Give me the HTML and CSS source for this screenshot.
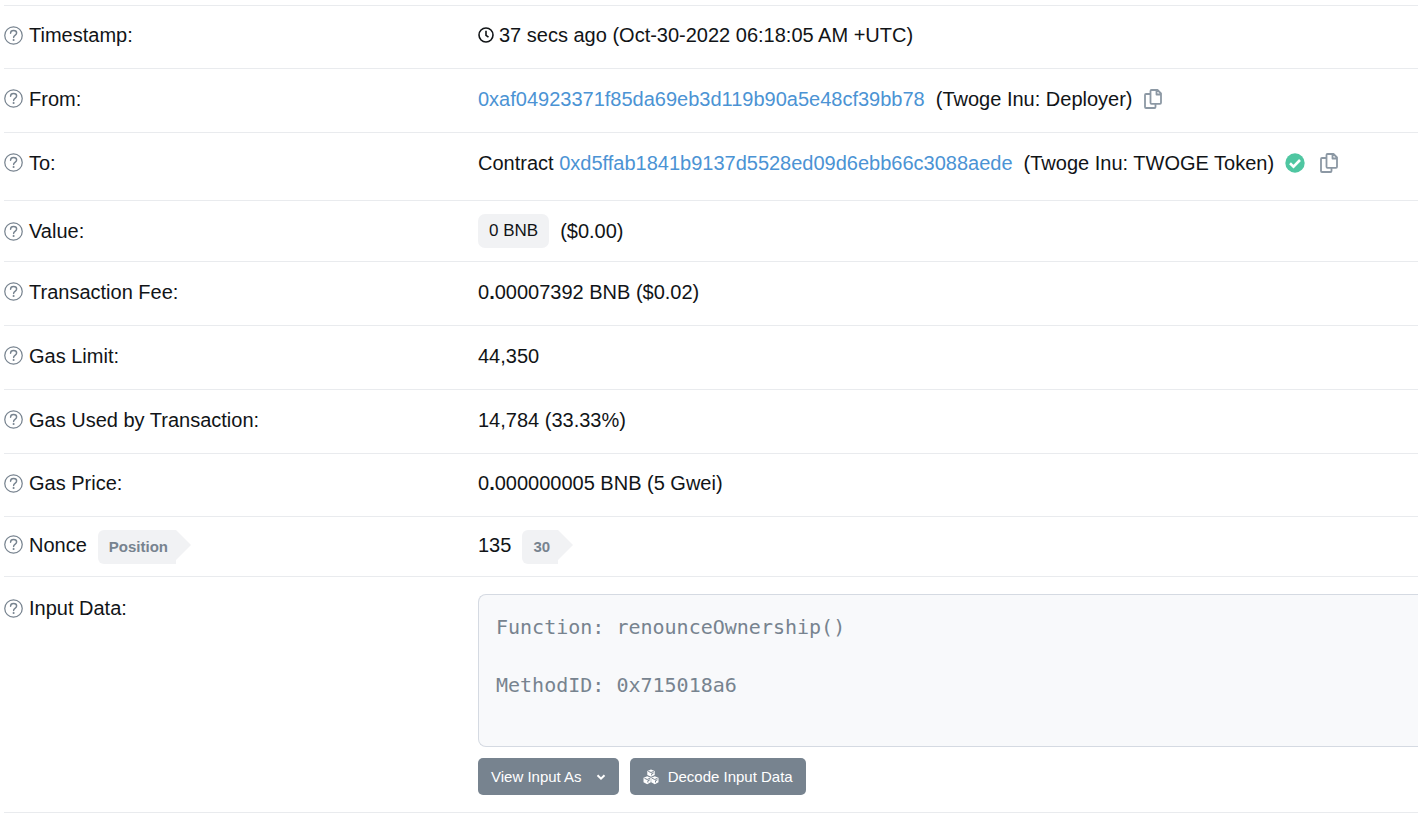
FILE: index.html
```html
<!DOCTYPE html>
<html lang="en">

<head>
    <meta charset="UTF-8">
    <meta name="viewport" content="width=device-width, initial-scale=1.0">
    <title>Transaction Details</title>
    <link rel="stylesheet" href="styles.css">
</head>

<body>
    <!-- shared icons -->
    <svg class="sprite" aria-hidden="true">
        <symbol id="help" viewBox="0 0 20 20">
            <circle cx="10" cy="10" r="9.2" fill="none" stroke="currentColor" stroke-width="1.3" />
            <path d="M6.900 7.600c0-1.700 1.300-2.900 3.200-2.900s3.200 1.100 3.200 2.700c0 1.200-.8 1.800-1.700 2.400-1 .7-1.500 1.200-1.500 2.300" fill="none"
                stroke="currentColor" stroke-width="1.500" stroke-linecap="round" />
            <circle cx="10.1" cy="14.700" r="1.100" fill="currentColor" />
        </symbol>
        <symbol id="copy" viewBox="0 0 18 20">
            <path d="M7.500 1h6L17 4.500V13.800a1 1 0 0 1-1 1H7.500a1 1 0 0 1-1-1V2a1 1 0 0 1 1-1z M12.500 1.200v4.300h4.300 M6.300 5H2a1 1 0 0 0-1 1v12a1 1 0 0 0 1 1h8.500a1 1 0 0 0 1-1v-3"
                fill="none" stroke="currentColor" stroke-width="1.8" stroke-linejoin="round" />
        </symbol>
    </svg>

    <dl class="details">
        <div class="row row-first">
            <dt class="label"><svg class="help"><use href="#help" /></svg>Timestamp:</dt>
            <dd class="value">
                <svg class="clock" viewBox="0 0 16 16">
                    <circle cx="8" cy="8" r="7" />
                    <path d="M8 3.800v4.500l2.500 1.900" />
                </svg>
                <span>37 secs ago (Oct-30-2022 06:18:05 AM +UTC)</span>
            </dd>
        </div>
        <div class="row">
            <dt class="label"><svg class="help"><use href="#help" /></svg>From:</dt>
            <dd class="value value-wide">
                <a href="#from">0xaf04923371f85da69eb3d119b90a5e48cf39bb78</a>
                <span>(Twoge Inu: Deployer)</span>
                <button class="copy" type="button" aria-label="Copy address"><svg><use href="#copy" /></svg></button>
            </dd>
        </div>
        <div class="row row-to">
            <dt class="label"><svg class="help"><use href="#help" /></svg>To:</dt>
            <dd class="value value-wide">
                <span>Contract <a href="#to">0xd5ffab1841b9137d5528ed09d6ebb66c3088aede</a></span>
                <span>(Twoge Inu: TWOGE Token)</span>
                <svg class="check" viewBox="0 0 20 20">
                    <circle cx="10" cy="10" r="9.700" fill="#4fc6a1" />
                    <path d="M5 10.300l3.500 3.400 6.500-6.700" fill="none" stroke="#fff" stroke-width="2.600" />
                </svg>
                <button class="copy copy-to" type="button" aria-label="Copy contract"><svg><use href="#copy" /></svg></button>
            </dd>
        </div>
        <div class="row row-badge">
            <dt class="label"><svg class="help"><use href="#help" /></svg>Value:</dt>
            <dd class="value value-wide">
                <span class="badge">0 BNB</span>
                <span>($0.00)</span>
            </dd>
        </div>
        <div class="row">
            <dt class="label"><svg class="help"><use href="#help" /></svg>Transaction Fee:</dt>
            <dd class="value"><span>0<b>.</b>00007392 BNB ($0.02)</span></dd>
        </div>
        <div class="row">
            <dt class="label"><svg class="help"><use href="#help" /></svg>Gas Limit:</dt>
            <dd class="value">44,350</dd>
        </div>
        <div class="row">
            <dt class="label"><svg class="help"><use href="#help" /></svg>Gas Used by Transaction:</dt>
            <dd class="value">14,784 (33.33%)</dd>
        </div>
        <div class="row row-first">
            <dt class="label"><svg class="help"><use href="#help" /></svg>Gas Price:</dt>
            <dd class="value"><span>0<b>.</b>000000005 BNB (5 Gwei)</span></dd>
        </div>
        <div class="row row-nonce">
            <dt class="label"><svg class="help"><use href="#help" /></svg>Nonce <span class="arrow">Position</span></dt>
            <dd class="value">135 <span class="arrow">30</span></dd>
        </div>
        <div class="row row-input">
            <dt class="label"><svg class="help"><use href="#help" /></svg><label for="input-data">Input Data:</label></dt>
            <dd class="input">
                <textarea id="input-data" class="data" rows="4" readonly>Function: renounceOwnership()

MethodID: 0x715018a6</textarea>
                <div class="buttons">
                    <button class="btn" type="button">View Input As
                        <svg class="chevron" viewBox="0 0 10 10">
                            <path d="M1.500 3.300L5 6.700l3.500-3.400" />
                        </svg>
                    </button>
                    <button class="btn btn-decode" type="button">
                        <svg class="cubes" viewBox="0 0 16 16">
                            <path class="solid" d="M8 .5l3.700 1.400v4.200L8 7.800 4.300 6.100V1.900z M4.200 7.200L7.800 8.700v4.500l-3.600 2-3.700-2V8.700z M11.800 7.200l3.700 1.500v4.500l-3.700 2-3.600-2V8.700z" />
                            <path class="edges" d="M5.300 2.400L8 3.500l2.700-1.100 M8.700 6.300V4.700l2-.8 M1.500 9.300l2.700 1.200 2.700-1.200 M4.900 13.500v-1.800l2-.9 M9.100 9.300l2.700 1.200 2.700-1.200 M12.500 13.500v-1.800l2-.9" />
                        </svg>
                        Decode Input Data
                    </button>
                </div>
            </dd>
        </div>
    </dl>
</body>

</html>
```

FILE: styles.css
```css
* {
    box-sizing: border-box;
}

body {
    margin: 0;
    padding: 5px 0 0 4px;
    background: #fff;
    color: #111417;
    font-family: "Liberation Sans", Arial, sans-serif;
    font-size: 20px;
    line-height: 28px;
}

a {
    color: #4b93d4;
    text-decoration: none;
}

button {
    font-family: inherit;
    border: 0;
    cursor: pointer;
}

.sprite {
    display: none;
}

.details {
    margin: 0;
    border-bottom: 1px solid #e9ebee;
}

.row {
    display: grid;
    grid-template-columns: 1fr 2fr;
    column-gap: 4px;
    align-items: center;
    min-height: 64px;
    padding-bottom: 4px;
    border-top: 1px solid #e9ebee;
}

.row-first {
    min-height: 63px;
}

.row-to {
    min-height: 68px;
    padding-bottom: 8px;
}

.row-badge {
    min-height: 61px;
    padding-bottom: 0;
}

.row-nonce {
    min-height: 60px;
    padding-bottom: 0;
}

.label,
.value {
    display: flex;
    align-items: center;
    margin: 0;
    white-space: nowrap;
}

.row-nonce .label,
.row-nonce .value {
    align-items: baseline;
}

.value {
    gap: 5px;
}

.value-wide {
    gap: 11px;
}

.help {
    width: 19px;
    height: 19px;
    margin-right: 6px;
    color: #77838f;
}

.row-nonce .help {
    align-self: center;
    margin-bottom: 4px;
}

.clock {
    width: 16px;
    height: 16px;
    fill: none;
    stroke: currentColor;
    stroke-width: 1.6;
}

.copy {
    display: flex;
    padding: 0;
    background: none;
    color: #8c98a4;
}

.copy svg {
    width: 18px;
    height: 20px;
}

.copy-to {
    margin-left: 4px;
}

.check {
    width: 20px;
    height: 20px;
}

.badge {
    padding: 3px 11px;
    border-radius: 7px;
    background: #f1f2f4;
    font-size: 17px;
}

/* tag with a pointer on its right side */
.arrow {
    position: relative;
    margin-left: 11px;
    padding: 3px 8px 3px 11px;
    border-radius: 6px 0 0 6px;
    background: #f1f2f4;
    color: #77838f;
    font-size: 15px;
    font-weight: bold;
}

.value .arrow {
    margin-left: 6px;
}

.arrow::after {
    content: "";
    position: absolute;
    top: 0;
    left: 100%;
    border: 15px solid transparent;
    border-left-color: #f1f2f4;
    border-right: 0;
}

.row-input {
    align-items: start;
    padding: 17px 0;
}

.input {
    margin: 0;
}

.data {
    display: block;
    width: 100%;
    height: 153px;
    padding: 18px 17px;
    border: 1px solid #d5dae2;
    border-right: 0;
    border-radius: 8px 0 0 8px;
    outline: 0;
    background: #f8f9fb;
    color: #77838f;
    font-family: "DejaVu Sans Mono", monospace;
    font-size: 20px;
    line-height: 29px;
    resize: none;
}

.buttons {
    display: flex;
    gap: 11px;
    margin-top: 11px;
}

.btn {
    display: flex;
    align-items: center;
    gap: 14px;
    height: 37px;
    padding: 0 13px;
    border-radius: 5px;
    background: #77838f;
    color: #fff;
    font-size: 15px;
}

.btn-decode {
    gap: 9px;
}

.chevron {
    width: 10px;
    height: 10px;
    fill: none;
    stroke: currentColor;
    stroke-width: 2;
}

.cubes {
    width: 16px;
    height: 16px;
}

.cubes .solid {
    fill: currentColor;
}

.cubes .edges {
    fill: none;
    stroke: #77838f;
    stroke-width: 1;
}
```
